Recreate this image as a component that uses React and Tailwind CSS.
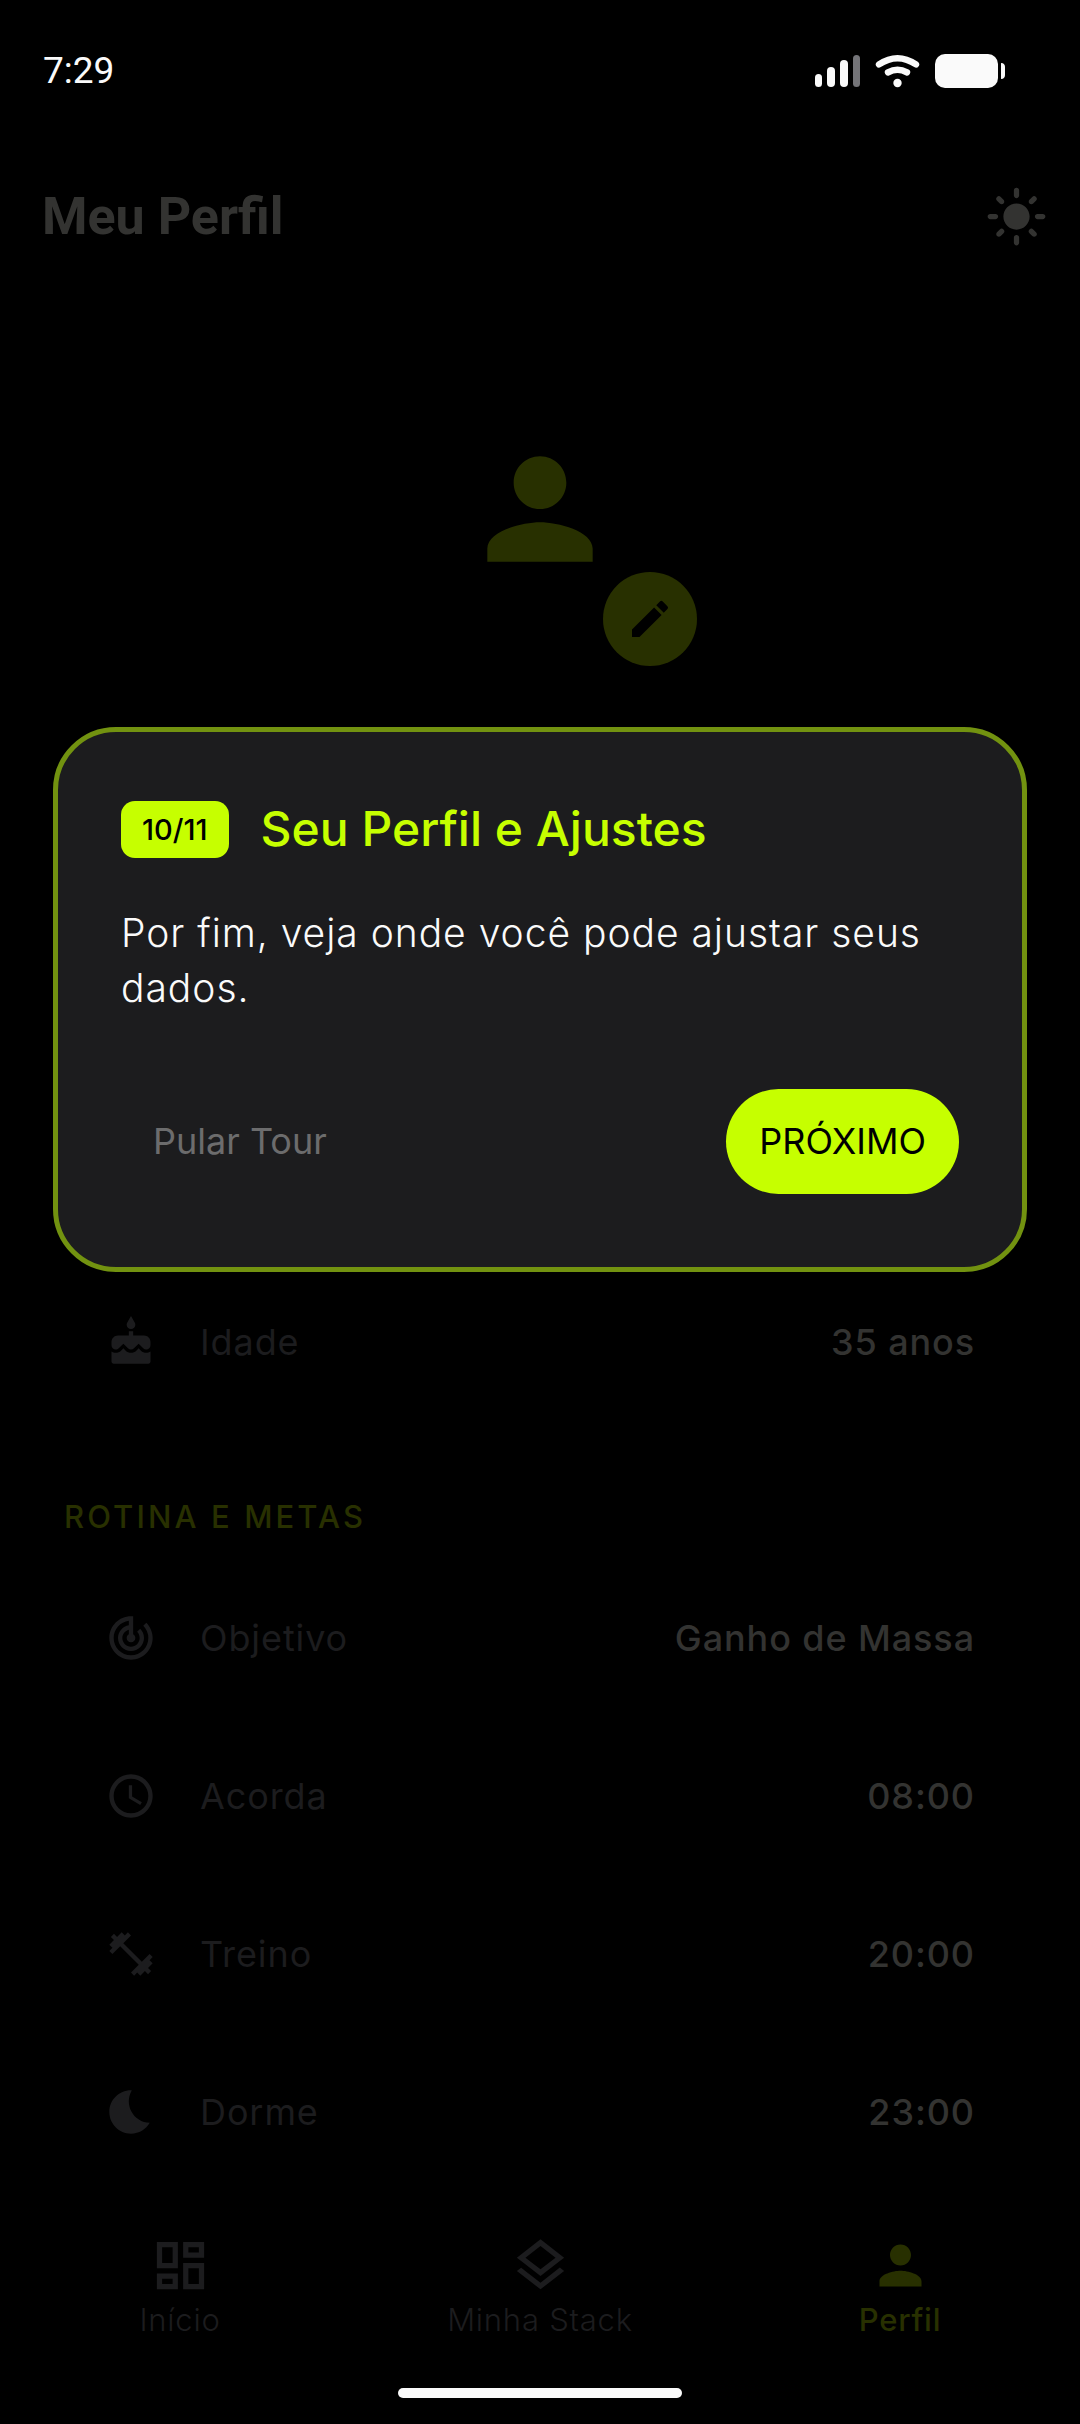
import {
  MdAccessTime,
  MdBedtime,
  MdCake,
  MdEdit,
  MdFitnessCenter,
  MdLightMode,
  MdOutlineDashboard,
  MdOutlineLayers,
  MdPerson,
  MdTrackChanges,
} from "react-icons/md";

const routine = [
  { icon: MdTrackChanges, label: "Objetivo", value: "Ganho de Massa" },
  { icon: MdAccessTime, label: "Acorda", value: "08:00" },
  { icon: MdFitnessCenter, label: "Treino", value: "20:00" },
  { icon: MdBedtime, label: "Dorme", value: "23:00" },
];

function StatusBar() {
  return (
    <div className="flex h-[142px] items-center justify-between pr-[75px] pl-[43px] font-[Roboto,sans-serif] text-[37px] text-[#fafafa]">
      <span>7:29</span>
      <svg width="190" height="34" viewBox="0 0 190 34" fill="#fafafa" aria-hidden="true">
        <rect x="0" y="20" width="7" height="13" rx="3.5" />
        <rect x="12" y="13" width="8" height="20" rx="4" />
        <rect x="25" y="6" width="8" height="27" rx="4" />
        <rect x="38" y="1" width="7" height="32" rx="3.5" fill="#747478" />
        <g fill="none" stroke="#fafafa" strokeWidth="6.4" strokeLinecap="round">
          <path d="M64 10.4Q82.500 -2 101 10.400" />
          <path d="M73 18.400Q82.500 13 92 18.400" />
        </g>
        <circle cx="82.500" cy="29" r="4.200" />
        <rect x="120" y="0" width="63" height="34" rx="10" />
        <path d="M186 9c3 0 4 2 4 4v8c0 2-1 4-4 4z" />
      </svg>
    </div>
  );
}

function InfoRow({ icon: Icon, label, value }) {
  return (
    <div className="flex h-[158px] items-center px-[105px] text-[36px] tracking-wide">
      <Icon className="size-[52px] text-[#1c1c1e]" />
      <span className="ml-[43px] text-[#1c1c1e]">{label}</span>
      <span className="ml-auto font-medium text-[#333331]">{value}</span>
    </div>
  );
}

function TourCard() {
  return (
    <div className="absolute inset-x-0 top-0 px-[53px] pt-[727px]">
      <div
        role="dialog"
        aria-labelledby="tour-title"
        className="rounded-[63px] border-[5px] border-[#729210] bg-[#1c1c1e] p-[63px]"
      >
        <div className="flex h-[68px] items-center gap-8">
          <span className="rounded-[14px] bg-[#c6ff00] px-[21px] py-[10px] text-[29px] leading-[37px] font-medium text-black">
            10/11
          </span>
          <h2 id="tour-title" className="text-[48px] leading-[66px] font-medium text-[#c6ff00]">
            Seu Perfil e Ajustes
          </h2>
        </div>
        <p className="mt-[42px] text-[39px] leading-[55px] font-light tracking-wide text-[#fafafa]">
          Por fim, veja onde você pode ajustar seus dados.
        </p>
        <div className="mt-[63px] flex h-[126px] items-center justify-between text-[36px]">
          <button type="button" className="h-[105px] px-8 text-[#6c6c6d]">
            Pular Tour
          </button>
          <button type="button" className="h-[105px] rounded-full bg-[#c6ff00] px-[33px] text-black">
            PRÓXIMO
          </button>
        </div>
      </div>
    </div>
  );
}

function NavItem({ icon: Icon, label, active }) {
  return (
    <a
      href="#"
      className={
        active
          ? "flex flex-1 flex-col items-center font-medium text-[#283000]"
          : "flex flex-1 flex-col items-center font-light text-[#1c1c1e]"
      }
    >
      <Icon className="size-[63px]" />
      <span className="text-[31px] leading-[46px] tracking-wide">{label}</span>
    </a>
  );
}

export default function App() {
  return (
    <div className="relative min-h-screen bg-black font-[Inter,sans-serif]">
      <StatusBar />
      <header className="flex h-[149px] items-center justify-between pr-8 pl-[42px]">
        <h1 className="font-[Roboto,sans-serif] text-[52px] font-bold text-[#333331]">Meu Perfil</h1>
        <button type="button" aria-label="Tema claro" className="text-[#333331]">
          <MdLightMode className="size-[63px]" />
        </button>
      </header>

      <main>
        <div className="relative mx-auto mt-[61px] flex size-[314px] items-center justify-center rounded-full">
          <MdPerson className="size-[158px] text-[#283000]" />
          <button
            type="button"
            aria-label="Editar foto"
            className="absolute right-0 bottom-0 flex size-[94px] items-center justify-center rounded-full bg-[#283000] text-black"
          >
            <MdEdit className="size-[48px]" />
          </button>
        </div>

        <section className="mt-[597px]">
          <InfoRow icon={MdCake} label="Idade" value="35 anos" />
        </section>

        <section className="mt-[72px]">
          <h2 className="mb-[18px] px-[64px] text-[31px] leading-[48px] font-medium tracking-widest text-[#283000]">
            ROTINA E METAS
          </h2>
          {routine.map((item) => (
            <InfoRow key={item.label} {...item} />
          ))}
        </section>
      </main>

      <nav className="flex pt-[43px]">
        <NavItem icon={MdOutlineDashboard} label="Início" />
        <NavItem icon={MdOutlineLayers} label="Minha Stack" />
        <NavItem icon={MdPerson} label="Perfil" active />
      </nav>
      <div className="mx-auto mt-[45px] h-[10px] w-[284px] rounded-full bg-[#fafafa]" />

      <TourCard />
    </div>
  );
}
